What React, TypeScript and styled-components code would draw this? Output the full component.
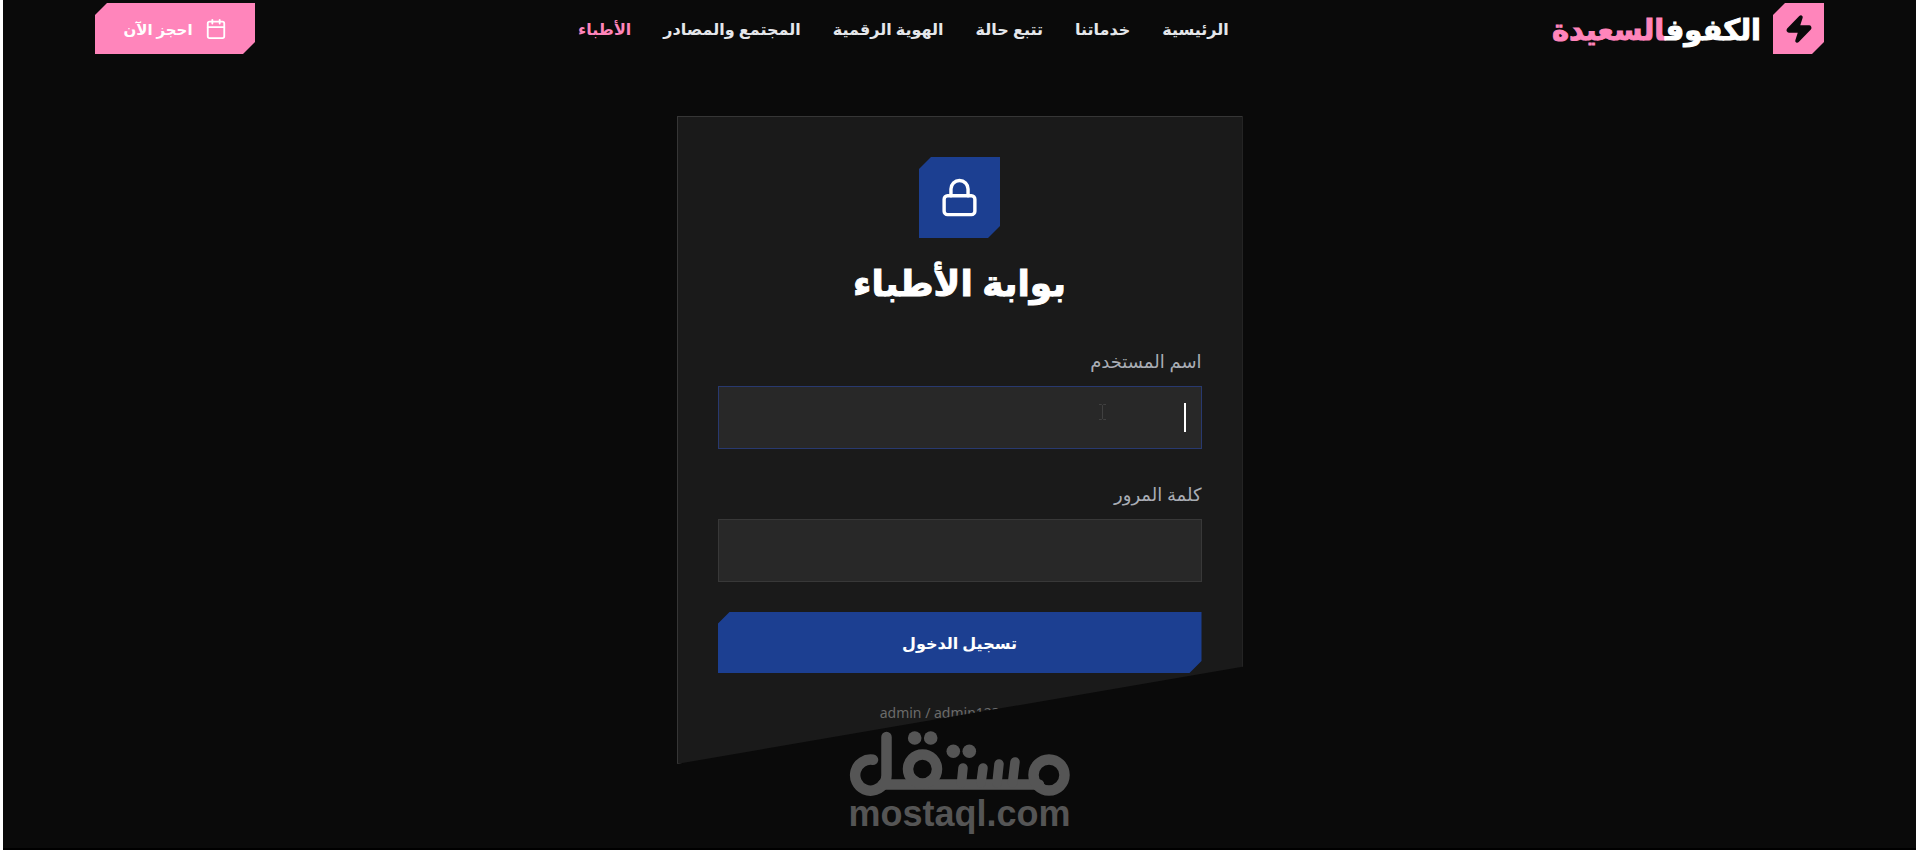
import React from 'react';
import styled, { createGlobalStyle } from 'styled-components';

const pink = '#ff85bb';
const blue = '#1c3f91';
const ink = '#0a0a0a';

const GlobalStyle = createGlobalStyle`
  *, *::before, *::after { box-sizing: border-box; }
  body {
    margin: 0;
    background: #ffffff;
    color: #ffffff;
    font-family: 'Noto Sans', 'DejaVu Sans', sans-serif;
  }
  #root { min-height: 100vh; display: flex; }
`;

const Page = styled.div`
  position: relative;
  flex: 1;
  margin: 0 4px 0 3px;
  background: ${ink};
  border-bottom: 2px solid #000000;
`;

const cutCorners = `clip-path: polygon(12px 0, 100% 0, 100% calc(100% - 12px), calc(100% - 12px) 100%, 0 100%, 0 12px);`;

const Header = styled.header`
  display: flex;
  align-items: center;
  justify-content: space-between;
  padding: 3px 92px 0;
`;

const Brand = styled.a`
  display: flex;
  align-items: center;
  gap: 12px;
  color: #ffffff;
  font-size: 29px;
  line-height: 40px;
  font-weight: 700;
  -webkit-text-stroke: 1px currentColor;
  text-decoration: none;
  white-space: nowrap;
`;

const BrandAccent = styled.span`
  color: ${pink};
`;

const BrandMark = styled.span`
  display: flex;
  align-items: center;
  justify-content: center;
  width: 51px;
  height: 51px;
  background: ${pink};
  color: ${ink};
  ${cutCorners}
`;

const Nav = styled.nav`
  display: flex;
  gap: 32px;
`;

const NavLink = styled.a<{ $active?: boolean }>`
  color: ${(p) => (p.$active ? pink : '#e5e7eb')};
  font-size: 16px;
  line-height: 24px;
  font-weight: 700;
  text-decoration: none;
  white-space: nowrap;
`;

const BookButton = styled.button`
  display: flex;
  align-items: center;
  justify-content: center;
  gap: 12px;
  width: 160px;
  height: 51px;
  padding: 0;
  border: 0;
  background: ${pink};
  color: #ffffff;
  font: 700 15px/24px 'Noto Sans', 'DejaVu Sans', sans-serif;
  ${cutCorners}
`;

const Main = styled.main`
  display: flex;
  justify-content: center;
  padding: 62px 24px 84px;
`;

const Card = styled.section`
  display: flex;
  flex-direction: column;
  width: 100%;
  max-width: 566px;
  padding: 40px;
  border: 1px solid #363636;
  background: #1a1a1a;
  clip-path: polygon(0 0, 100% 0, 100% 85%, 0 100%);
`;

const LockBadge = styled.div`
  display: flex;
  align-items: center;
  justify-content: center;
  align-self: center;
  width: 81px;
  height: 81px;
  margin-bottom: 22px;
  background: ${blue};
  ${cutCorners}
`;

const Title = styled.h1`
  margin: 0 0 40px;
  font-size: 36px;
  line-height: 46px;
  font-weight: 700;
  -webkit-text-stroke: 1px currentColor;
  text-align: center;
`;

const Form = styled.form`
  display: flex;
  flex-direction: column;
  gap: 30px;
`;

const Field = styled.div`
  position: relative;
  display: flex;
  flex-direction: column;
  gap: 10px;
`;

const Label = styled.label`
  color: #a9adb5;
  font-size: 18px;
  line-height: 30px;
`;

const Input = styled.input<{ $active?: boolean }>`
  width: 100%;
  height: 63px;
  padding: 0 15px;
  border: 1px solid ${(p) => (p.$active ? '#28396f' : '#383838')};
  border-radius: 0;
  outline: 0;
  background: #282828;
  color: #ffffff;
  font: 400 20px/28px 'Noto Sans', 'DejaVu Sans', sans-serif;
`;

const Caret = styled.span`
  position: absolute;
  right: 16px;
  bottom: 17px;
  width: 2px;
  height: 29px;
  background: #ffffff;
`;

const Pointer = styled.svg`
  position: absolute;
  right: 95px;
  bottom: 28px;
`;

const Submit = styled.button`
  height: 61px;
  padding: 0;
  border: 0;
  background: ${blue};
  color: #ffffff;
  font: 700 16px/24px 'Noto Sans', 'DejaVu Sans', sans-serif;
  ${cutCorners}
`;

const Hint = styled.p`
  margin: 30px 0 0;
  color: #6b6b6b;
  font-size: 14px;
  line-height: 20px;
  text-align: center;
`;

const Watermark = styled.div`
  position: absolute;
  right: 0;
  bottom: 17px;
  left: 0;
  display: flex;
  flex-direction: column;
  align-items: center;
  color: #555555;
  font-family: 'Liberation Sans', sans-serif;
  font-size: 36px;
  line-height: 34px;
  font-weight: 700;
  pointer-events: none;
`;

const links = ['الرئيسية', 'خدماتنا', 'تتبع حالة', 'الهوية الرقمية', 'المجتمع والمصادر', 'الأطباء'];

const BoltIcon = () => (
  <svg width="30" height="30" viewBox="0 0 24 24" fill="currentColor" stroke="currentColor" strokeWidth="2" strokeLinecap="round" strokeLinejoin="round" aria-hidden="true">
    <path d="M4 14a1 1 0 0 1-.78-1.63l9.9-10.2a.5.5 0 0 1 .86.46l-1.92 6.02A1 1 0 0 0 13 10h7a1 1 0 0 1 .78 1.63l-9.9 10.2a.5.5 0 0 1-.86-.46l1.92-6.02A1 1 0 0 0 11 14z" />
  </svg>
);

const CalendarIcon = () => (
  <svg width="22" height="22" viewBox="0 0 24 24" fill="none" stroke="currentColor" strokeWidth="2" strokeLinecap="round" strokeLinejoin="round" aria-hidden="true">
    <path d="M8 2v4M16 2v4M3 10h18" />
    <rect x="3" y="4" width="18" height="18" rx="2" />
  </svg>
);

const LockIcon = () => (
  <svg width="41" height="41" viewBox="0 0 24 24" fill="none" stroke="currentColor" strokeWidth="2" strokeLinecap="round" strokeLinejoin="round" aria-hidden="true">
    <rect x="3" y="11" width="18" height="11" rx="2" />
    <path d="M7 11V7a5 5 0 0 1 10 0v4" />
  </svg>
);

const WatermarkLogo = () => (
  <svg width="221" height="66" viewBox="0 0 221 66" fill="none" stroke="currentColor" strokeWidth="10.500" strokeLinecap="round" aria-hidden="true">
    <path d="M24 28.800A15.500 15.500 0 1 0 35 52Q37.500 49 37.500 44V6" />
    <path d="M34 53.500H190" />
    <circle cx="73.500" cy="38" r="14.500" />
    <circle cx="200" cy="44" r="15.500" />
    <path d="M114 37L112.500 52M134 37L132 52M150 33L148 52M166 31L163.500 52" strokeWidth="9.500" />
    <g fill="currentColor" stroke="none">
      <circle cx="65.700" cy="7" r="6.800" />
      <circle cx="81.700" cy="7" r="6.800" />
      <circle cx="104.300" cy="20.300" r="6.800" />
      <circle cx="120.300" cy="20.300" r="6.800" />
    </g>
  </svg>
);

export default function App() {
  return (
    <>
      <GlobalStyle />
      <Page dir="rtl" lang="ar">
        <Header>
          <Brand href="#">
            <BrandMark><BoltIcon /></BrandMark>
            <span>الكفوف<BrandAccent>السعيدة</BrandAccent></span>
          </Brand>
          <Nav>
            {links.map((text, i) => (
              <NavLink key={text} href="#" $active={i === links.length - 1}>{text}</NavLink>
            ))}
          </Nav>
          <BookButton type="button"><CalendarIcon />احجز الآن</BookButton>
        </Header>
        <Main>
          <Card>
            <LockBadge><LockIcon /></LockBadge>
            <Title>بوابة الأطباء</Title>
            <Form>
              <Field>
                <Label htmlFor="username">اسم المستخدم</Label>
                <Input id="username" type="text" $active />
                <Caret />
                <Pointer width="9" height="18" viewBox="0 0 9 18" fill="none" stroke="#404040" aria-hidden="true">
                  <path d="M1 1.500h2.500l1 1 1-1H8M4.500 2.500v13M1 16.500h2.500l1-1 1 1H8" />
                </Pointer>
              </Field>
              <Field>
                <Label htmlFor="password">كلمة المرور</Label>
                <Input id="password" type="password" />
              </Field>
              <Submit type="button">تسجيل الدخول</Submit>
            </Form>
            <Hint>تجربة: <bdi>admin / admin123</bdi></Hint>
          </Card>
        </Main>
        <Watermark dir="ltr">
          <WatermarkLogo />
          <span>mostaql.com</span>
        </Watermark>
      </Page>
    </>
  );
}
